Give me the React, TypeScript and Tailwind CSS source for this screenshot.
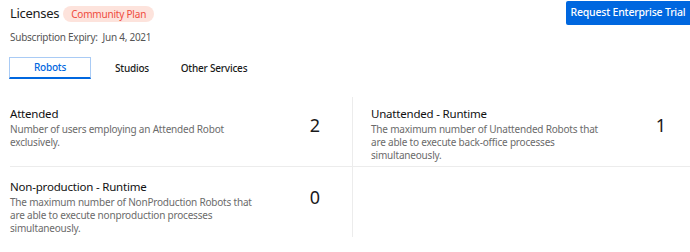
const font = { fontFamily: '"Noto Sans", "Open Sans", sans-serif' };

type Lic = { title: string; desc: string; count: number };

const rows: Lic[][] = [
  [
    { title: "Attended", desc: "Number of users employing an Attended Robot exclusively.", count: 2 },
    {
      title: "Unattended - Runtime",
      desc: "The maximum number of Unattended Robots that are able to execute back-office processes simultaneously.",
      count: 1,
    },
  ],
  [
    {
      title: "Non-production - Runtime",
      desc: "The maximum number of NonProduction Robots that are able to execute nonproduction processes simultaneously.",
      count: 0,
    },
  ],
];

const LicenseCell = ({ lic, right, second }: { lic: Lic; right?: boolean; second?: boolean }) => (
  <div
    className={
      (right ? "pl-[18px] pr-[22px] " : "pr-[30px] ") +
      (second ? "pt-[12px] " : "pt-[9px] ") +
      "flex items-start justify-between"
    }
  >
    <div className={right ? "w-[236px]" : "w-[248px]"}>
      <div className="text-[11.5px] leading-[16px] tracking-[-0.2px] text-[#111]">{lic.title}</div>
      <div className="mt-[1px] text-[10px] leading-[13px] tracking-[-0.2px] text-[#6b6b6b]">{lic.desc}</div>
    </div>
    <div className={(second ? "mt-[6px] " : "mt-[7px] ") + "text-[18px] leading-[24px] text-[#1a1a1a] w-[14px] text-center"}>
      {lic.count}
    </div>
  </div>
);

export default function App() {
  return (
    <div className="w-[690px] h-[252px] bg-white overflow-hidden" style={font}>
      <div className="flex justify-between items-start">
        <div className="pl-[10px] pt-[4px]">
          <div className="flex items-center gap-[4px] h-[20px]">
            <span className="text-[13px] tracking-[-0.3px] text-[#1a1a1a]">Licenses</span>
            <span className="rounded-full bg-[#fde3dc] text-[#ef4b3c] text-[10px] tracking-[-0.2px] leading-[16px] px-[8px]">
              Community Plan
            </span>
          </div>
          <div className="mt-[6px] text-[10px] leading-[14px] tracking-[-0.25px] text-[#555]">
            Subscription Expiry:&nbsp;&nbsp;Jun 4, 2021
          </div>
        </div>
        <button className="mt-[1px] h-[24px] w-[124px] bg-[#0067df] text-white text-[10.5px] tracking-[-0.2px] font-medium whitespace-nowrap rounded-l-[2px]">
          Request Enterprise Trial
        </button>
      </div>

      <div className="flex pl-[9px] mt-[13px] text-[10px] tracking-[-0.2px] font-medium">
        <div className="w-[82px] h-[22px] flex items-center justify-center border border-[#a9cbf5] border-b-2 border-b-[#0067df] text-[#0067df]">
          Robots
        </div>
        <div className="w-[82px] h-[22px] flex items-center justify-center text-[#1a1a1a]">Studios</div>
        <div className="w-[82px] h-[22px] flex items-center justify-center text-[#1a1a1a]">Other Services</div>
      </div>

      <div className="ml-[10px] mt-[18px]">
        {rows.map((row, i) => (
          <div
            key={i}
            className={i === 0 ? "grid grid-cols-[343px_1fr] border-b border-[#ececec]" : "grid grid-cols-[343px_1fr]"}
          >
            <div className={(i === 0 ? "h-[69px] " : "h-[70px] ") + "border-r border-[#ececec]"}>
              <LicenseCell lic={row[0]} second={i === 1} />
            </div>
            <div>{row[1] && <LicenseCell lic={row[1]} right second={i === 1} />}</div>
          </div>
        ))}
      </div>
    </div>
  );
}
